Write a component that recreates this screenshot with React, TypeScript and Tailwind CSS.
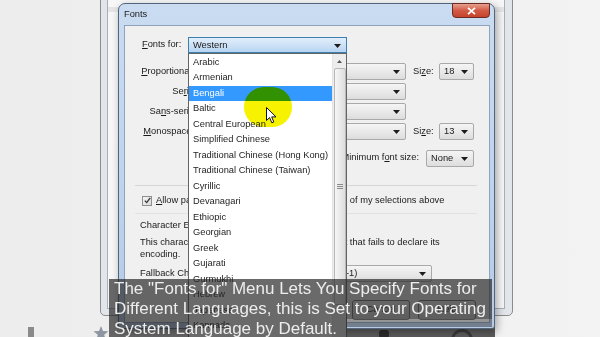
import React from "react";

const languages = [
  "Arabic",
  "Armenian",
  "Bengali",
  "Baltic",
  "Central European",
  "Simplified Chinese",
  "Traditional Chinese (Hong Kong)",
  "Traditional Chinese (Taiwan)",
  "Cyrillic",
  "Devanagari",
  "Ethiopic",
  "Georgian",
  "Greek",
  "Gujarati",
  "Gurmukhi",
  "Hebrew",
  "Japanese",
  "Kannada",
];

const Arrow = () => (
  <svg width="7" height="4" viewBox="0 0 7 4" className="absolute right-[5px] top-[6px]">
    <path d="M0 0h7L3.5 4z" fill="#1c1c1c" />
  </svg>
);

const Combo = ({ className, text }: { className: string; text?: string }) => (
  <div
    className={`relative h-[17px] shrink-0 rounded-[2px] border border-[#a9a9a9] bg-linear-to-b from-[#f5f5f5] to-[#dddddd] ${className}`}
  >
    {text && <span className="absolute left-[4px] top-0 leading-[15px] whitespace-nowrap">{text}</span>}
    <Arrow />
  </div>
);

const Button = ({ label }: { label: string }) => (
  <div className="h-[20px] w-[58px] rounded-[3px] border border-[#707070] bg-linear-to-b from-[#f2f2f2] to-[#d9d9d9] flex items-center justify-center">
    {label}
  </div>
);

const FontRow = ({ label, size }: { label: React.ReactNode; size?: string }) => (
  <div className="flex items-center h-[17px]">
    <div className="w-[69px] text-right whitespace-nowrap">{label}</div>
    <Combo className="ml-[4px] w-[208px]" />
    {size && (
      <>
        <div className="ml-[7px] w-[26px]">
          Si<u>z</u>e:
        </div>
        <Combo className="w-[35px]" text={size} />
      </>
    )}
  </div>
);

const FontsDialog = () => (
  <div className="absolute left-[118px] top-[3px] w-[377px] h-[326px] rounded-t-[7px] rounded-b-[3px] border border-[#53657c] bg-linear-to-b from-[#cadcf1] via-[#bfd4ed] to-[#b5cbe5] shadow-[2px_3px_8px_rgba(0,0,0,0.35)] flex flex-col">
    <div className="relative h-[21px] shrink-0 flex items-center pl-[5px] text-[#1b1b1b]">
      Fonts
      <div className="absolute left-[333px] top-[-1px] w-[38px] h-[15px] rounded-b-[4px] border border-[#6d2a22] bg-linear-to-b from-[#e6a08f] via-[#d25a45] to-[#c4432c] flex items-center justify-center">
        <svg width="9" height="8" viewBox="0 0 9 8">
          <path d="M1 0.8 8 7.2M8 0.8 1 7.2" stroke="#fff" strokeWidth="1.8" />
        </svg>
      </div>
    </div>

    <div className="ml-[5px] mr-[4px] mb-[5px] flex-1 border border-[#8ea3bd] bg-[#f0f0f0] flex flex-col">
      <div className="mt-[11px] h-[16px] flex items-center pl-[17px]">
        <div className="w-[46px]">
          <u>F</u>onts for:
        </div>
        <div className="relative h-[16px] w-[159px] border border-[#3c7fb1] bg-linear-to-b from-[#e3effb] to-[#b9d5f2]">
          <span className="absolute left-[4px] top-0 leading-[14px]">Western</span>
          <Arrow />
        </div>
      </div>

      <div className="mt-[10px] flex flex-col gap-[3px]">
        <FontRow
          label={
            <>
              <u>P</u>roportional:
            </>
          }
          size="18"
        />
        <FontRow
          label={
            <>
              Se<u>r</u>if:
            </>
          }
        />
        <FontRow
          label={
            <>
              Sa<u>n</u>s-serif:
            </>
          }
        />
        <FontRow
          label={
            <>
              <u>M</u>onospace:
            </>
          }
          size="13"
        />
      </div>

      <div className="mt-[10px] h-[16px] flex items-center justify-end pr-[15px]">
        <div className="mr-[7px]">
          Minimum f<u>o</u>nt size:
        </div>
        <Combo className="w-[48px] h-[16px]" text="None" />
      </div>

      <div className="mt-[19px] ml-[10px] mr-[12px] h-[2px] border-t border-[#d6d6d6] border-b-white" />

      <div className="mt-[8px] ml-[17px] h-[11px] flex items-center whitespace-nowrap">
        <div className="w-[10px] h-[10px] border border-[#8f8f8f] bg-linear-to-br from-[#f4f4f4] to-[#dcdcdc] flex items-center justify-center">
          <svg width="7" height="7" viewBox="0 0 7 7">
            <path d="M0.8 3.6 2.7 5.6 6.2 0.8" stroke="#333" strokeWidth="1.3" fill="none" />
          </svg>
        </div>
        <span className="ml-[4px]">
          <u>A</u>llow pages to choose their own fonts, instead of my selections above
        </span>
      </div>

      <div className="mt-[7px] ml-[10px] mr-[12px] h-[1px] bg-[#e2e2e2]" />

      <div className="mt-[5px] ml-[15px] leading-[12px]">Character Encoding</div>
      <div className="mt-[5px] ml-[15px] w-[310px] leading-[12px]">
        This character encoding is used for legacy content that fails to declare its encoding.
      </div>

      <div className="mt-[5px] ml-[15px] h-[17px] flex items-center">
        <div className="w-[121px] whitespace-nowrap">Fallback Character Encoding:</div>
        <Combo className="w-[171px]" text="Western (ISO-8859-1)" />
      </div>

      <div className="mt-[18px] flex justify-end gap-[8px] pr-[13px]">
        <Button label="OK" />
        <Button label="Cancel" />
        <Button label="Help" />
      </div>
    </div>
  </div>
);

const LanguageList = () => (
  <div className="absolute left-[188px] top-[53px] w-[159px] h-[292px] border border-[#646464] bg-white flex">
    <div className="flex-1 pt-[0.5px]">
      {languages.map((l) => (
        <div
          key={l}
          className={`h-[15.5px] leading-[15.5px] pl-[4px] whitespace-nowrap ${
            l === "Bengali" ? "bg-[#3399ff] text-white" : "text-[#1e1e1e]"
          }`}
        >
          {l}
        </div>
      ))}
    </div>
    <div className="w-[14px] bg-[#ededed] border-l border-[#e4e4e4] flex flex-col items-center">
      <div className="h-[14px] flex items-center justify-center">
        <svg width="5" height="3" viewBox="0 0 5 3">
          <path d="M0 3 2.5 0 5 3z" fill="#555" />
        </svg>
      </div>
      <div className="w-[12px] h-[237px] rounded-[2px] border border-[#b8b8b8] bg-linear-to-r from-[#f6f6f6] to-[#dedede] flex flex-col items-center justify-center gap-[1px]">
        <div className="w-[6px] h-[1px] bg-[#8a8a8a]" />
        <div className="w-[6px] h-[1px] bg-[#8a8a8a]" />
        <div className="w-[6px] h-[1px] bg-[#8a8a8a]" />
      </div>
    </div>
  </div>
);

export default function App() {
  return (
    <div className="relative w-[600px] h-[337px] overflow-hidden bg-linear-to-r from-[#ededed] to-[#f3f3f3] text-[9.3px] text-[#1a1a1a] [font-family:'Liberation_Sans',Arial,sans-serif]">
      {/* Options window behind */}
      <div className="absolute left-[100px] top-[-40px] w-[413px] h-[356px] rounded-[5px] border border-[#8c8c8c] bg-[#e2e5e9] p-[6px] pr-[7px]">
        <div className="w-full h-full border border-[#a8b0ba] bg-[#f7f7f7] flex flex-col">
          <div className="mt-[39px] h-[5px] relative bg-[#e6e6e6]">
            <div className="absolute left-[99px] top-0 w-[40px] h-[5px] bg-[#b9b9b9]" />
            <div className="absolute left-[159px] top-0 w-[1px] h-[5px] bg-[#999]" />
            <div className="absolute left-[164px] top-0 w-[1px] h-[5px] bg-[#999]" />
            <div className="absolute left-[244px] top-0 w-[1px] h-[5px] bg-[#999]" />
            <div className="absolute left-[292px] top-0 w-[1px] h-[5px] bg-[#999]" />
            <div className="absolute left-[322px] top-0 w-[1px] h-[5px] bg-[#999]" />
          </div>
        </div>
      </div>

      {/* bottom strip items */}
      <div className="absolute left-[28px] top-[327px] w-[6px] h-[12px] bg-[#8a8a8a]" />
      <svg className="absolute left-[93px] top-[326px]" width="16" height="14" viewBox="0 0 16 14">
        <path d="M8 0 10 5 15.5 5.3 11.2 8.7 12.7 14 8 11 3.3 14 4.8 8.7 0.5 5.3 6 5z" fill="#8e96a2" />
      </svg>
      <div className="absolute left-[343px] top-[326px] w-[152px] h-[11px] bg-[#5c5c5c]">
        <div className="absolute left-[36px] top-[4px] w-[10px] h-[8px] rounded-[3px] bg-[#2c2c2c]" />
        <div className="absolute left-[108px] top-[3px] w-[22px] h-[22px] rounded-full border-[3px] border-[#3a3a3a]" />
      </div>

      <FontsDialog />
      <LanguageList />

      {/* click highlight */}
      <div className="absolute left-[244px] top-[87px] w-[48px] h-[40px] rounded-full bg-[#f6f200] mix-blend-multiply" />
      <svg className="absolute left-[266px] top-[107px]" width="11" height="17" viewBox="0 0 11 17">
        <path d="M0.5 0.5V13.5L3.6 10.6 5.8 15.8 7.8 15 5.7 9.9H10z" fill="#fff" stroke="#111" strokeWidth="1" strokeLinejoin="round" />
      </svg>

      {/* caption */}
      <div className="absolute left-[109px] top-[279px] text-[17px] leading-[20px] text-[#ededed]">
        <div className="w-[383px] pl-[5px] whitespace-nowrap bg-[rgba(35,35,35,0.68)]">
          The "Fonts for" Menu Lets You Specify Fonts for
        </div>
        <div className="w-[383px] pl-[5px] whitespace-nowrap bg-[rgba(35,35,35,0.68)]">
          Different Languages, this is Set to your Operating
        </div>
        <div className="flex">
          <div className="w-[238px] pl-[5px] whitespace-nowrap bg-[rgba(35,35,35,0.68)]">
            System Language by Default.
          </div>
          <div className="w-[145px] h-[8px] bg-[rgba(35,35,35,0.45)]" />
        </div>
      </div>
    </div>
  );
}
